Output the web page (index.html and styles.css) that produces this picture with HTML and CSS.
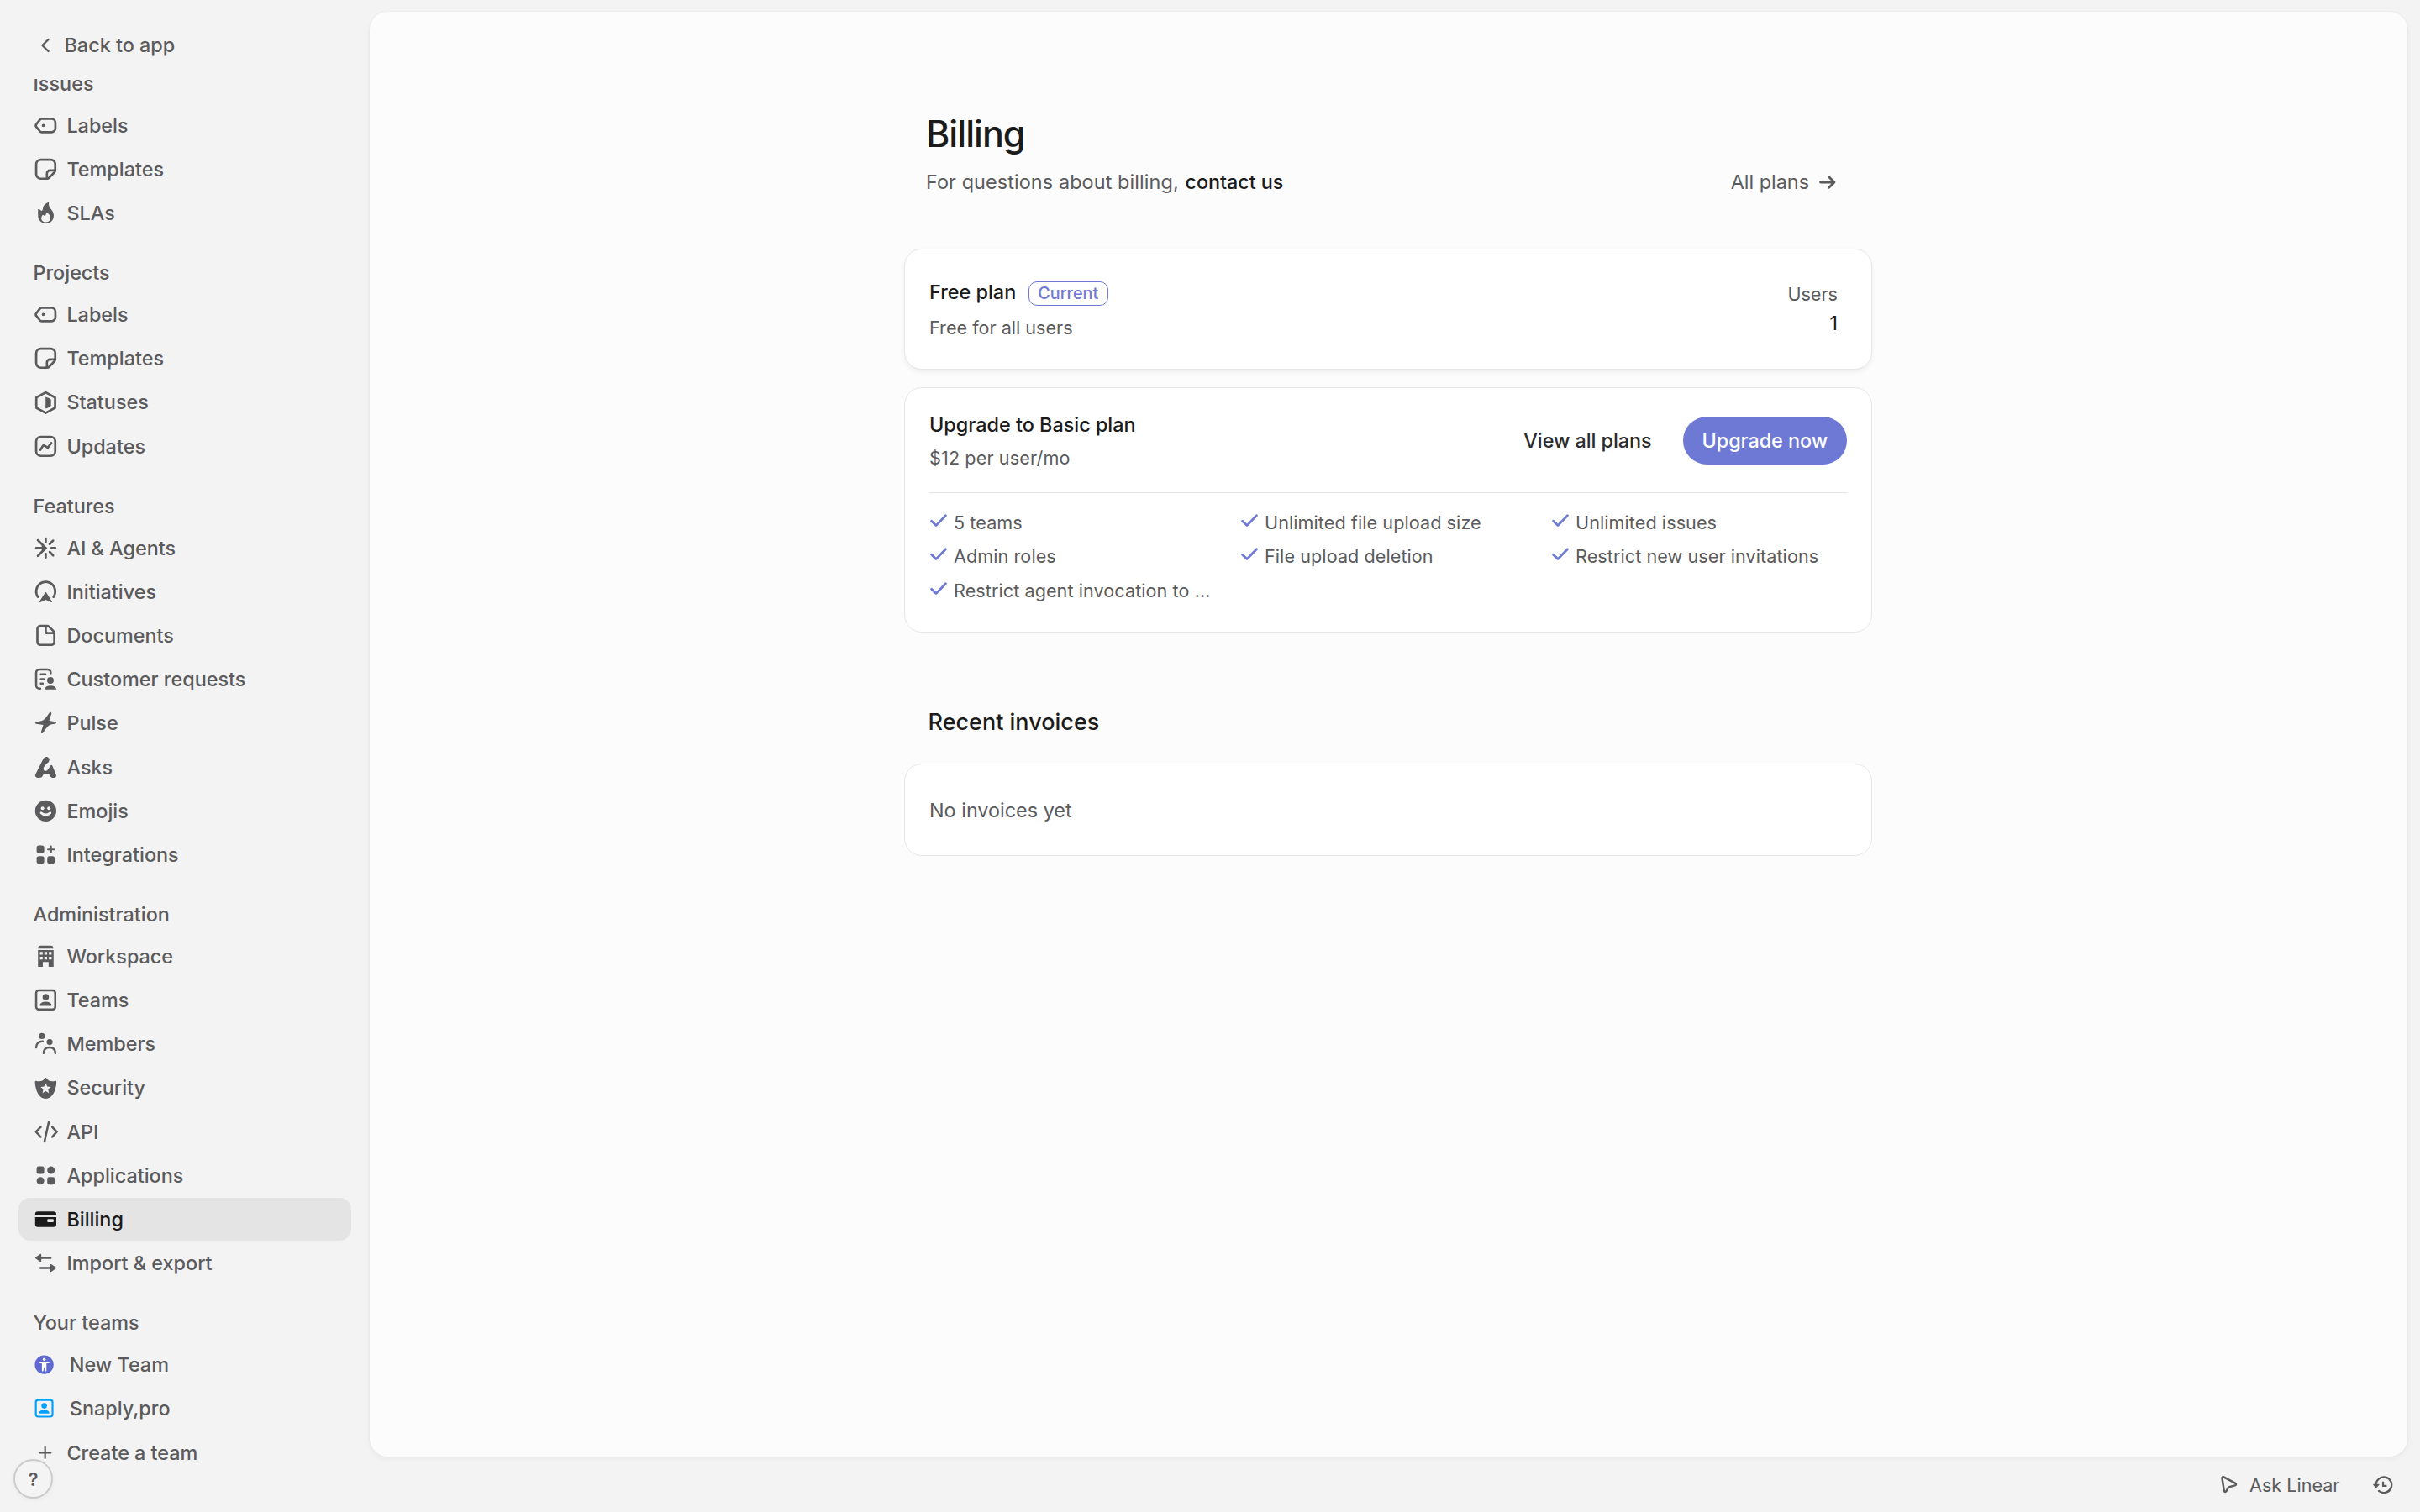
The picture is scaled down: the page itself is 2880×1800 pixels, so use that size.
FILE: index.html
```html
<!DOCTYPE html>
<html lang="en">
<head>
    <meta charset="UTF-8">
    <meta name="viewport" content="width=device-width, initial-scale=1.0">
    <title>Billing</title>
    <link rel="stylesheet" href="styles.css">
</head>
<body>
    <!-- Icons used more than once -->
    <svg class="sprite" aria-hidden="true">
        <symbol id="icon-label" viewBox="0 0 16 16">
            <path d="M5.3 3.6H11.8a2.6 2.6 0 0 1 2.6 2.6v3.6a2.6 2.6 0 0 1-2.6 2.6H5.3a1.6 1.6 0 0 1-1.2-.6L1.8 8.9a1.4 1.4 0 0 1 0-1.8L4.1 4.2a1.6 1.6 0 0 1 1.2-.6Z" fill="none" stroke="currentColor" stroke-width="1.5"/>
            <circle cx="6.4" cy="8" r="1"/>
        </symbol>
        <symbol id="icon-template" viewBox="0 0 16 16">
            <path d="M4.7 1.7h6.6a3 3 0 0 1 3 3v4.1a1.6 1.6 0 0 1-.5 1.2l-3.7 3.8a1.6 1.6 0 0 1-1.2.5H4.7a3 3 0 0 1-3-3V4.7a3 3 0 0 1 3-3Z" fill="none" stroke="currentColor" stroke-width="1.5"/>
            <path d="M14.2 8.8h-3.4a2 2 0 0 0-2 2v3.4" fill="none" stroke="currentColor" stroke-width="1.5"/>
        </symbol>
        <symbol id="icon-team" viewBox="0 0 16 16">
            <rect x="1.7" y="1.7" width="12.6" height="12.6" rx="1.7" fill="none" stroke="currentColor" stroke-width="1.4"/>
            <circle cx="8" cy="6.1" r="2.1"/>
            <path d="M4.1 11.3C4.5 9.9 6 9.1 8 9.1s3.5.8 3.9 2.2c.1.4-.1.6-.5.6H4.6c-.4 0-.6-.2-.5-.6Z"/>
        </symbol>
        <symbol id="icon-check" viewBox="0 0 20 16">
            <path d="M1.6 8.2 7 13.6 18.4 1.8" fill="none" stroke="currentColor" stroke-width="2.8" stroke-linecap="round" stroke-linejoin="round"/>
        </symbol>
    </svg>

    <div class="app">
        <nav class="sidebar">
            <a class="back">
                <svg class="back-icon" viewBox="0 0 12 18"><path d="M9.6 2 2.4 9l7.2 7" fill="none" stroke="currentColor" stroke-width="2.4" stroke-linecap="round" stroke-linejoin="round"/></svg>
                Back to app
            </a>

            <div class="nav-scroll">
                <div class="nav-group">
                    <div class="nav-heading">Issues</div>
                    <a class="nav-item"><svg class="icon"><use href="#icon-label"/></svg>Labels</a>
                    <a class="nav-item"><svg class="icon"><use href="#icon-template"/></svg>Templates</a>
                    <a class="nav-item">
                        <svg class="icon" viewBox="0 0 16 16"><path fill-rule="evenodd" d="M9.5 1.1c.3-.2.7 0 .6.4-.2 1.5.2 2.6 1.2 3.8C12.5 6.6 13.3 7.9 13.3 9.8c0 3.1-2.3 5.2-5.2 5.2s-5.2-2.1-5.2-5.1V5.9c0-.4.5-.6.8-.3L5.4 6.8C6.3 5.9 6 4.9 6.5 3.7 7.1 2.5 8.1 1.8 9.5 1.1ZM8.3 7.6c.1 1.2-.2 2-1 2.6-.4-.5-.8-.8-1.3-.9-.5.8-.9 1.4-.9 2.3 0 1.5 1.3 2.5 3 2.5s3-1 3-2.6c0-1.8-1.1-3.2-2.8-3.9Z"/></svg>
                        SLAs
                    </a>
                </div>

                <div class="nav-group">
                    <div class="nav-heading">Projects</div>
                    <a class="nav-item"><svg class="icon"><use href="#icon-label"/></svg>Labels</a>
                    <a class="nav-item"><svg class="icon"><use href="#icon-template"/></svg>Templates</a>
                    <a class="nav-item">
                        <svg class="icon" viewBox="0 0 16 16"><path d="m8 1.2 6.2 3.4v6.8L8 14.8l-6.2-3.4V4.6Z" fill="none" stroke="currentColor" stroke-width="1.5" stroke-linejoin="round"/><path d="M7.9 4.2c2.3.7 3.6 1.2 3.6 2.2v3.2c0 1-1.3 1.5-3.6 2.3Z"/></svg>
                        Statuses
                    </a>
                    <a class="nav-item">
                        <svg class="icon" viewBox="0 0 16 16"><g fill="none" stroke="currentColor" stroke-width="1.5"><rect x="1.7" y="1.7" width="12.6" height="12.6" rx="3"/><path d="M4.5 10.3 6.1 7.7c.2-.4.6-.4 1-.2l1.7 1.1c.3.2.6.2.9-.2l2-2.6" stroke-linecap="round" stroke-linejoin="round"/></g></svg>
                        Updates
                    </a>
                </div>

                <div class="nav-group">
                    <div class="nav-heading">Features</div>
                    <a class="nav-item">
                        <svg class="icon" viewBox="0 0 16 16"><path d="M8 1.7v2.5M8 11.8v2.5M11.8 8h2.5M10.6 5.4l2.3-2.3M10.6 10.6l2.3 2.3M1.7 8H8M2.8 2.8 8 8l-5.2 5.2" fill="none" stroke="currentColor" stroke-width="1.5" stroke-linecap="round"/><path d="M5.4 5.7 8.5 8l-3.1 2.3Z"/></svg>
                        AI &amp; Agents
                    </a>
                    <a class="nav-item">
                        <svg class="icon" viewBox="0 0 16 16"><path d="M2.9 11.5a6.3 6.3 0 1 1 10.2 0" fill="none" stroke="currentColor" stroke-width="1.5" stroke-linecap="round"/><path d="M7.5 8.7c.2-.5.8-.5 1 0l3.6 5.7c.2.4-.1.8-.5.6L8 13.3 4.4 15c-.4.2-.7-.2-.5-.6Z"/></svg>
                        Initiatives
                    </a>
                    <a class="nav-item">
                        <svg class="icon" viewBox="0 0 16 16"><path d="M4.5 1.7h4.4c.5 0 .9.2 1.3.5l3 3c.3.3.5.8.5 1.2v5.9a2 2 0 0 1-2 2H4.5a2 2 0 0 1-2-2V3.7a2 2 0 0 1 2-2ZM8 1.8v3.7a1 1 0 0 0 1 1h4.5" fill="none" stroke="currentColor" stroke-width="1.5"/></svg>
                        Documents
                    </a>
                    <a class="nav-item">
                        <svg class="icon" viewBox="0 0 16 16"><path d="M4.4 14.3H3.7a2 2 0 0 1-2-2V3.7a2 2 0 0 1 2-2h5.6a2 2 0 0 1 2 2v.5M4.8 4.8h3M4.8 8h1.8M4.8 11h1.2" fill="none" stroke="currentColor" stroke-width="1.4" stroke-linecap="round"/><circle cx="11.1" cy="8.9" r="2.2"/><path d="M7.2 14.9c.4-1.7 1.9-2.5 4-2.5s3.5.8 3.9 2.5Z"/></svg>
                        Customer requests
                    </a>
                    <a class="nav-item">
                        <svg class="icon" viewBox="0 0 16 16"><path d="M10.4 1.4c.5-.8 1.6-.4 1.4.5l-1.5 4.7 4.1.7c.8.2.9 1.1 0 1.3-1.8.3-3.3.5-4.3 1.2-1.2.9-2.5 2.7-3.9 4.9-.5.7-1.5.3-1.3-.5L6.4 9.4 1.7 8.7C.8 8.5.8 7.5 1.7 7.3c2.2-.2 3.7-.4 4.7-1.1C7.7 5.3 9 3.5 10.4 1.4Z"/></svg>
                        Pulse
                    </a>
                    <a class="nav-item">
                        <svg class="icon" viewBox="0 0 16 16"><path d="M6.3 2.6C7 1.2 8.2.8 9.2 1.2c1.2.5 1.6 1.9.9 3C9.5 5.2 8.6 5.6 7.9 6.4 6.7 7.7 6.1 9 6.8 10c.6.8 1.8.6 2.5-.3l2-2.9c.3-.4.7-.4 1 0l2.5 6c.5 1.3 0 2.2-1.5 2.2-1.3 0-2.1-.4-2.4-1.3-.4-1-1.3-1.3-2.7-1.3s-2 .5-2.3 1.5C5.6 14.7 4.8 15 3.3 15 1.5 15 .7 14.1 1.2 12.8Z"/></svg>
                        Asks
                    </a>
                    <a class="nav-item">
                        <svg class="icon" viewBox="0 0 16 16"><circle cx="8" cy="8" r="7"/><circle class="cutout" cx="5.9" cy="6.3" r="1.1"/><circle class="cutout" cx="10.1" cy="6.3" r="1.1"/><path d="M5 9.3c1.5 1.6 4.5 1.6 6 0" class="cutout-line" fill="none" stroke-width="1.5" stroke-linecap="round"/></svg>
                        Emojis
                    </a>
                    <a class="nav-item">
                        <svg class="icon" viewBox="0 0 16 16"><rect x="2" y="2" width="5" height="5" rx="1.5"/><rect x="2" y="9" width="5" height="5" rx="1.5"/><rect x="9" y="9" width="5" height="5" rx="1.5"/><path d="M11.5 2.6v4M9.5 4.6h4" fill="none" stroke="currentColor" stroke-width="1.2" stroke-linecap="round"/></svg>
                        Integrations
                    </a>
                </div>

                <div class="nav-group">
                    <div class="nav-heading">Administration</div>
                    <a class="nav-item">
                        <svg class="icon" viewBox="0 0 16 16"><path d="M4.5 1h7A1.5 1.5 0 0 1 13 2.5V2.9H3v-.4A1.5 1.5 0 0 1 4.5 1Z"/><path fill-rule="evenodd" d="M2.9 3.9h10.3V15H9.9v-3.2H6.1V15H2.9ZM4.2 5.2v1.8H6V5.2ZM7.1 5.2v1.8h1.8V5.2ZM10.1 5.2v1.8h1.8V5.2ZM4.2 8.4v1.8H6V8.4ZM7.1 8.4v1.8h1.8V8.4ZM10.1 8.4v1.8h1.8V8.4Z"/></svg>
                        Workspace
                    </a>
                    <a class="nav-item"><svg class="icon"><use href="#icon-team"/></svg>Teams</a>
                    <a class="nav-item">
                        <svg class="icon" viewBox="0 0 16 16"><circle cx="5.5" cy="3" r="2"/><circle cx="10.6" cy="7" r="2"/><path d="M1.7 10.5c0-2.5 1.7-4 4.3-4M6.6 14.3c0-2.3 1.5-3.8 3.9-3.8s3.9 1.5 3.9 3.8" fill="none" stroke="currentColor" stroke-width="1.4" stroke-linecap="round"/></svg>
                        Members
                    </a>
                    <a class="nav-item">
                        <svg class="icon" viewBox="0 0 16 16"><path d="M7.4 1.5c.4-.5.9-.5 1.2 0 1 1.7 3.2 2.5 5.7 1.7.5-.1.8.1.8.6-.2 5.4-2.4 11.2-7.1 11.2S1.1 9.2.9 3.8c0-.5.3-.7.8-.6 2.5.8 4.7 0 5.7-1.7Z"/><path class="cutout" d="m8 4.7 1 2.2 2.4.3-1.8 1.6.5 2.4L8 10l-2.1 1.2.5-2.4-1.8-1.6L7 6.9Z"/></svg>
                        Security
                    </a>
                    <a class="nav-item">
                        <svg class="icon" viewBox="0 0 16 16"><path d="M4.7 4.8 1.6 8l3.1 3.4M10 1.7 7.2 14.4M12.3 4.8 15.3 8l-3 3.4" fill="none" stroke="currentColor" stroke-width="1.4" stroke-linecap="round" stroke-linejoin="round"/></svg>
                        API
                    </a>
                    <a class="nav-item">
                        <svg class="icon" viewBox="0 0 16 16"><rect x="2" y="2" width="5" height="5" rx="1.3"/><circle cx="11.5" cy="4.5" r="2.5"/><circle cx="4.5" cy="11.5" r="2.5"/><rect x="9" y="9" width="5" height="5" rx="1.3"/></svg>
                        Applications
                    </a>
                    <a class="nav-item active">
                        <svg class="icon" viewBox="0 0 16 16"><path d="M2.8 2.9h10.4A1.8 1.8 0 0 1 15 4.7v.3H1v-.3A1.8 1.8 0 0 1 2.8 2.9Z"/><path fill-rule="evenodd" d="M1 6.7h14v4.7a1.8 1.8 0 0 1-1.8 1.8H2.8A1.8 1.8 0 0 1 1 11.4ZM9.7 7.9a.7.7 0 0 0-.7.7v.7c0 .4.3.7.7.7h2.9c.4 0 .7-.3.7-.7v-.7a.7.7 0 0 0-.7-.7Z"/></svg>
                        Billing
                    </a>
                    <a class="nav-item">
                        <svg class="icon" viewBox="0 0 16 16"><path d="M4 4.7h7.2M4.6 11.4H12" fill="none" stroke="currentColor" stroke-width="1.4" stroke-linecap="round"/><path d="M1.3 4.3 4.3 2.2c.4-.2.8 0 .8.4v4.2c0 .4-.4.6-.8.4L1.3 5.1c-.3-.2-.3-.6 0-.8ZM14.7 11 11.7 8.9c-.4-.2-.8 0-.8.4v4.2c0 .4.4.6.8.4l3-2.1c.3-.2.3-.6 0-.8Z"/></svg>
                        Import &amp; export
                    </a>
                </div>

                <div class="nav-group">
                    <div class="nav-heading">Your teams</div>
                    <a class="nav-item team">
                        <svg class="icon team-purple" viewBox="0 0 16 16"><circle cx="8" cy="8" r="7.1"/><circle cx="8" cy="4" r="1.1" fill="#fff"/><path d="M4.6 5.8h6.8c.8 0 .8 1 .1 1.1l-1.8.3v5.3c0 .7-1.1.8-1.2.1L8.2 10h-.4l-.3 2.6c-.1.7-1.2.6-1.2-.1V7.2l-1.8-.3c-.7-.1-.7-1.1.1-1.1Z" fill="#fff"/></svg>
                        New Team
                    </a>
                    <a class="nav-item team"><svg class="icon team-blue"><use href="#icon-team"/></svg>Snaply,pro</a>
                    <a class="nav-item">
                        <svg class="icon" viewBox="0 0 16 16"><path d="M7.6 4.3v7.4M3.9 8h7.4" fill="none" stroke="currentColor" stroke-width="1.2" stroke-linecap="round"/></svg>
                        Create a team
                    </a>
                </div>
            </div>
        </nav>

        <div class="content">
            <main class="panel">
                <div class="page">
                    <header class="page-header">
                        <h1>Billing</h1>
                        <div class="subtitle">
                            <p>For questions about billing, <a class="contact">contact us</a></p>
                            <a class="all-plans">
                                All plans
                                <svg viewBox="0 0 20 18"><path d="M1.5 9h16M11.7 2.8 18 9l-6.3 6.2" fill="none" stroke="currentColor" stroke-width="2.8" stroke-linecap="round" stroke-linejoin="round"/></svg>
                            </a>
                        </div>
                    </header>

                    <section class="card current-plan">
                        <div>
                            <div class="plan-name">Free plan <span class="badge">Current</span></div>
                            <div class="plan-note">Free for all users</div>
                        </div>
                        <div class="users">
                            <div class="users-label">Users</div>
                            <div class="users-count">1</div>
                        </div>
                    </section>

                    <section class="card upgrade">
                        <div class="upgrade-header">
                            <div>
                                <div class="upgrade-title">Upgrade to Basic plan</div>
                                <div class="upgrade-price">$12 per user/mo</div>
                            </div>
                            <div class="actions">
                                <button class="btn">View all plans</button>
                                <button class="btn btn-primary">Upgrade now</button>
                            </div>
                        </div>
                        <ul class="features">
                            <li><svg class="check"><use href="#icon-check"/></svg>5 teams</li>
                            <li><svg class="check"><use href="#icon-check"/></svg>Unlimited file upload size</li>
                            <li><svg class="check"><use href="#icon-check"/></svg>Unlimited issues</li>
                            <li><svg class="check"><use href="#icon-check"/></svg>Admin roles</li>
                            <li><svg class="check"><use href="#icon-check"/></svg>File upload deletion</li>
                            <li><svg class="check"><use href="#icon-check"/></svg>Restrict new user invitations</li>
                            <li><svg class="check"><use href="#icon-check"/></svg>Restrict agent invocation to ...</li>
                        </ul>
                    </section>

                    <h2>Recent invoices</h2>
                    <section class="card invoices">No invoices yet</section>
                </div>
            </main>

            <footer class="bottom-bar">
                <a class="ask">
                    <svg viewBox="0 0 20 21"><path d="M1.5 3 3.8 17.7c.2 1.5 1.9 1.7 2.6.5l2.3-4.1c.3-.5.6-.8 1.2-.9l6.9-1.8c1.5-.4 1.6-2.1.2-2.7L3.4 1.4C2.3.9 1.3 1.8 1.5 3Z" fill="none" stroke="currentColor" stroke-width="2.5" stroke-linejoin="round"/></svg>
                    Ask Linear
                </a>
                <svg class="history" viewBox="0 0 24 22"><path d="M3.6 10.5a9.3 9.3 0 1 1 3.4 7.4" fill="none" stroke="currentColor" stroke-width="2.3" stroke-linecap="round"/><path d="M.7 9.7h6.2c.6 0 .8.6.5 1L4.5 14c-.4.5-1 .5-1.4 0L.3 10.7c-.3-.4-.1-1 .4-1Z"/><path d="M12 6.8v5h4.4" fill="none" stroke="currentColor" stroke-width="2.2"/></svg>
            </footer>
        </div>
    </div>

    <button class="help">?</button>
</body>
</html>
```
FILE: styles.css
```css
* {
    box-sizing: border-box;
}
body {
    margin: 0;
    background-color: #f3f3f3;
    color: #5b5b5d;
    font-family: Inter, sans-serif;
    font-size: 23.4px;
}
h1, h2, p, ul {
    margin: 0;
    padding: 0;
}
svg {
    display: block;
    flex-shrink: 0;
    fill: currentColor;
}
.sprite {
    display: none;
}
.app {
    display: flex;
    height: 1800px;
    overflow: hidden;
}

/* Sidebar */
.sidebar {
    display: flex;
    flex-direction: column;
    width: 439.5px;
    flex-shrink: 0;
    padding: 0 21.6px 0 22px;
    font-weight: 500;
}
.back {
    display: flex;
    align-items: center;
    gap: 16.5px;
    height: 94px;
    flex-shrink: 0;
    padding: 13px 0 0 26px;
}
.back-icon {
    width: 12px;
    height: 18px;
}
.nav-scroll {
    flex: 1;
    min-height: 0;
    overflow: hidden;
}
.nav-group {
    display: flex;
    flex-direction: column;
    gap: 1.8px;
    margin-bottom: 22.4px;
}
.nav-group:first-child {
    margin-top: -18.2px;
}
.nav-heading {
    height: 46.4px;
    line-height: 47px;
    padding-left: 17.5px;
}
.nav-item {
    display: flex;
    align-items: center;
    gap: 10.6px;
    height: 50.4px;
    padding-left: 18px;
    border-radius: 14px;
}
.nav-item.active {
    background-color: #e4e4e4;
    color: #1b1b1b;
}
.icon {
    width: 28.8px;
    height: 28.8px;
}
.team {
    gap: 17.6px;
}
.team .icon {
    width: 25.2px;
    height: 25.2px;
}
.team-purple {
    color: #5e6ad2;
}
.team-blue {
    color: #02a0ff;
}
.cutout {
    fill: #f3f3f3;
}
.cutout-line {
    stroke: #f3f3f3;
}

/* Main panel */
.content {
    display: flex;
    flex-direction: column;
    flex: 1;
    padding: 14.4px 15.5px 0 0;
}
.panel {
    height: 1719.6px;
    background-color: #fcfcfc;
    border-radius: 21px;
    box-shadow: 0 0 2px rgba(0,0,0,0.08), 0 3px 6px rgba(0,0,0,0.04);
}
.page {
    width: 1152px;
    margin: 0 auto;
    padding-top: 115.6px;
}
.page-header {
    padding: 0 43px 0 26px;
    margin-bottom: 61px;
}
h1 {
    height: 58px;
    margin-bottom: 11px;
    color: #1b1b1b;
    font-size: 43.2px;
    font-weight: 500;
    line-height: 58px;
    letter-spacing: -1px;
}
.subtitle {
    display: flex;
    justify-content: space-between;
    height: 36px;
    line-height: 36px;
    letter-spacing: 0.1px;
}
.contact {
    margin-left: 1px;
    color: #1b1b1b;
    font-weight: 500;
    letter-spacing: -0.05px;
}
.all-plans {
    display: flex;
    align-items: center;
    gap: 12px;
    letter-spacing: 0;
}
.all-plans svg {
    width: 20px;
    height: 18px;
}
.card {
    background-color: #fff;
    border: 1px solid #e7e7e7;
    border-radius: 21px;
}
.current-plan {
    display: flex;
    justify-content: space-between;
    height: 144px;
    margin-bottom: 21px;
    padding: 34px 40px 0 29px;
    box-shadow: 0 3px 6px rgba(0,0,0,0.06);
}
.plan-name {
    display: flex;
    gap: 14.6px;
    height: 33px;
    margin-bottom: 12px;
    color: #1b1b1b;
    font-weight: 500;
    line-height: 33px;
}
.badge {
    align-self: flex-end;
    height: 29px;
    padding: 0 11px 0 10.5px;
    border: 1px solid #6e79d6;
    border-radius: 10px;
    color: #6e79d6;
    font-size: 19.8px;
    line-height: 27px;
}
.plan-note {
    font-size: 21.6px;
    line-height: 28px;
}
.users {
    padding-top: 2px;
    line-height: 34px;
    text-align: right;
}
.users-label {
    font-size: 21.6px;
}
.users-count {
    color: #1b1b1b;
    line-height: 36px;
}
.upgrade {
    height: 292px;
    padding: 24px 29px 0 29px;
}
.upgrade-header {
    display: flex;
    justify-content: space-between;
    align-items: center;
    height: 80px;
    margin-bottom: 20px;
    line-height: 40px;
}
.upgrade-title {
    color: #1b1b1b;
    font-weight: 500;
}
.upgrade-price {
    padding-bottom: 2px;
    font-size: 21.6px;
    line-height: 38px;
    letter-spacing: 0.12px;
}
.actions {
    display: flex;
    gap: 14px;
    margin-bottom: 3px;
}
.btn {
    height: 57px;
    padding: 0 23px;
    border: none;
    border-radius: 29px;
    background: none;
    color: #2c2c2d;
    font-family: inherit;
    font-size: 23.4px;
    font-weight: 500;
    letter-spacing: -0.06px;
    cursor: pointer;
}
.btn-primary {
    background-color: #6e79d6;
    color: #fff;
}
.features {
    display: grid;
    grid-template-columns: repeat(3, 1fr);
    column-gap: 18px;
    padding-top: 15px;
    border-top: 1px solid #e4e4e4;
    list-style: none;
    font-size: 21.6px;
    line-height: 40.4px;
    letter-spacing: 0.07px;
}
.features li {
    display: flex;
    gap: 8px;
    padding-left: 1px;
    white-space: nowrap;
}
.check {
    width: 20px;
    height: 16px;
    margin-top: 10px;
    color: #6e79d6;
}
h2 {
    margin: 87px 0 29px;
    padding-left: 28.5px;
    color: #1b1b1b;
    font-size: 27px;
    font-weight: 500;
    line-height: 40px;
}
.invoices {
    height: 110px;
    padding-left: 29px;
    line-height: 109px;
}

/* Bottom bar */
.bottom-bar {
    display: flex;
    justify-content: flex-end;
    align-items: center;
    gap: 39px;
    height: 66px;
    padding: 2px 17px 0 0;
}
.ask {
    display: flex;
    align-items: center;
    gap: 14px;
    font-size: 21.6px;
}
.ask svg {
    width: 20px;
    height: 21px;
}
.history {
    width: 24px;
    height: 22px;
}
.help {
    position: absolute;
    left: 16px;
    top: 1737px;
    width: 47px;
    height: 47px;
    padding: 0;
    border: 2px solid #cbcbcb;
    border-radius: 50%;
    background-color: #f4f4f4;
    color: #5b5b5d;
    font-family: inherit;
    font-size: 21.6px;
    font-weight: 600;
    box-shadow: 0 2px 6px rgba(0,0,0,0.04);
}
```
